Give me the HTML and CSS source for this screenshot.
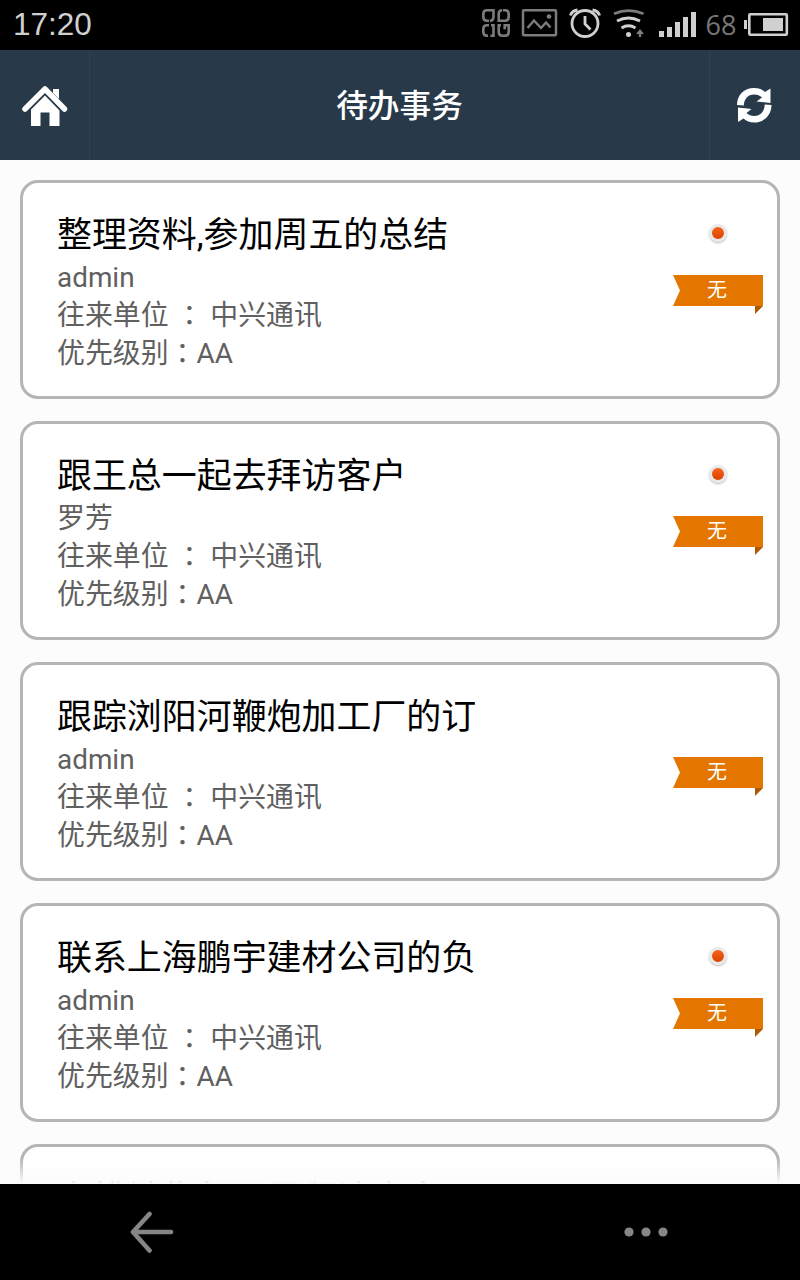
FILE: index.html
```html
<!DOCTYPE html>
<html lang="zh-CN">
<head>
  <meta charset="UTF-8">
  <meta name="viewport" content="width=device-width, initial-scale=1.0">
  <title>待办事务</title>
  <link rel="stylesheet" href="styles.css">
</head>
<body>
  <div class="status-bar">
    <span class="clock">17:20</span>
    <svg class="status-icons" width="330" height="50" viewBox="0 0 330 50">
      <!-- app grid -->
      <g fill="none" stroke="#7c7c7c" stroke-width="2.600">
        <path d="M19 20.700h-2q-3.700 0-3.700-3.700v-3q0-3.700 3.700-3.700h6.500v7q0 3.400-3.500 3.400"/>
        <path d="M33 10.300h2q3.700 0 3.700 3.700v3q0 3.700-3.700 3.700h-6.300v-7q0-3.400 3.500-3.400"/>
        <path d="M19 25.300h-2q-3.700 0-3.700 3.700v3q0 3.700 3.700 3.700h1M20.500 35.700h3v-10.400h-2.500"/>
        <path d="M31 25.300h-2.300v6.700q0 3.700 3.700 3.700h2.600q3.700 0 3.700-3.700v-6.700h-4v4"/>
      </g>
      <!-- picture -->
      <g fill="none" stroke="#7c7c7c" stroke-width="2.500">
        <rect x="53" y="10.300" width="33" height="25" rx="1"/>
        <path d="M57.500 28l6.500-7.500 7 7.500 5-5.500 4.500 5"/>
        <circle cx="79" cy="16.500" r="2.300" fill="#7c7c7c" stroke="none"/>
      </g>
      <!-- alarm -->
      <g fill="none" stroke="#d0d0d0">
        <circle cx="115" cy="23.500" r="13" stroke-width="2.800"/>
        <path d="M115 16v8l5.500 5.500" stroke-width="2.800"/>
        <path d="M100.500 15.500q1-4.500 7-5.500M129.500 15.500q-1-4.500-7-5.500" stroke-width="3"/>
      </g>
      <!-- wifi -->
      <g fill="none" stroke="#d0d0d0" stroke-width="2.800">
        <path d="M144 13.800q14.500-6.500 29.500 0" stroke="#7c7c7c"/>
        <path d="M147 21q11.500-6 23 0"/>
        <path d="M151.500 28q7-4.500 14 0"/>
        <circle cx="158.500" cy="34.500" r="2.500" fill="#d0d0d0" stroke="none"/>
        <path d="M170 29l4 5h-2.800v3h-2.400v-3h-2.800z" fill="#7c7c7c" stroke="none"/>
      </g>
      <!-- signal -->
      <path d="M189 31h5v6h-5zM197 27h5v10h-5zM205 22h5v15h-5zM213 17h5v20h-5zM221 12h5v25h-5z" fill="#d0d0d0"/>
      <text class="battery-level" x="235.500" y="34.500">68</text>
      <!-- battery -->
      <rect x="279.300" y="14.300" width="37.500" height="20.500" rx="1" fill="none" stroke="#d0d0d0" stroke-width="2.600"/>
      <path d="M274 20h3v9h-3zM293 18h20v13h-20z" fill="#d0d0d0"/>
    </svg>
  </div>

  <div class="header">
    <div class="header-btn left">
      <svg width="46" height="42" viewBox="0 0 46 42">
        <path d="M31 4h6v10l-6-6z" fill="#fff"/>
        <path d="M3 24L23 4l19.500 20" fill="none" stroke="#fff" stroke-width="5.500" stroke-linecap="round" stroke-linejoin="round"/>
        <path d="M23 10.500l14.500 15v15.500H27.500V27.500H18.500V41H9V24.500z" fill="#fff"/>
        <path d="M7 25.500L23 9l15 15.500" fill="none" stroke="#283a49" stroke-width="1"/>
      </svg>
    </div>
    <h1>待办事务</h1>
    <div class="header-btn right">
      <svg width="36" height="36" viewBox="0 0 36 36">
        <g fill="#fff">
          <path d="M1 18C1 8 8 1 18 1c5 0 8 1.200 11 4l5.500-3.500V16L20.500 14.500l5.500-4C24 8.500 21.500 7.500 18 7.500 12 7.500 8 12 7.800 18.500z"/>
          <path d="M35.500 18C35.500 28 28 35.500 18.500 35.500c-5 0-8-1.200-11-4L2 35V20.500L15.500 22l-5 4c2 2 4.500 3 8 3 6 0 10-4.500 10.200-11.500z"/>
        </g>
      </svg>
    </div>
  </div>

  <div class="list">
    <div class="card">
      <div class="info">
        <h2>整理资料,参加周五的总结</h2>
        <p>admin</p>
        <p>往来单位 <span class="colon" lang="zh-TW">：</span> 中兴通讯</p>
        <p>优先级别<span class="colon" lang="zh-TW">：</span>AA</p>
      </div>
      <div class="side">
        <span class="dot"></span>
        <div class="ribbon">无</div>
      </div>
    </div>
    <div class="card">
      <div class="info">
        <h2>跟王总一起去拜访客户</h2>
        <p>罗芳</p>
        <p>往来单位 <span class="colon" lang="zh-TW">：</span> 中兴通讯</p>
        <p>优先级别<span class="colon" lang="zh-TW">：</span>AA</p>
      </div>
      <div class="side">
        <span class="dot"></span>
        <div class="ribbon">无</div>
      </div>
    </div>
    <div class="card">
      <div class="info">
        <h2>跟踪浏阳河鞭炮加工厂的订</h2>
        <p>admin</p>
        <p>往来单位 <span class="colon" lang="zh-TW">：</span> 中兴通讯</p>
        <p>优先级别<span class="colon" lang="zh-TW">：</span>AA</p>
      </div>
      <div class="side">
        <span class="dot read"></span>
        <div class="ribbon">无</div>
      </div>
    </div>
    <div class="card">
      <div class="info">
        <h2>联系上海鹏宇建材公司的负</h2>
        <p>admin</p>
        <p>往来单位 <span class="colon" lang="zh-TW">：</span> 中兴通讯</p>
        <p>优先级别<span class="colon" lang="zh-TW">：</span>AA</p>
      </div>
      <div class="side">
        <span class="dot"></span>
        <div class="ribbon">无</div>
      </div>
    </div>
    <div class="card">
      <div class="info">
        <h2>安排销售部下周拜访客户</h2>
      </div>
    </div>
    <div class="fade"></div>
  </div>

  <div class="nav-bar">
    <svg width="44" height="44" viewBox="0 0 44 44">
      <path d="M19.500 4L3 22l16.500 18.500M3 22h38" fill="none" stroke="#868686" stroke-width="4.600" stroke-linecap="round" stroke-linejoin="round"/>
    </svg>
    <svg width="44" height="10" viewBox="0 0 44 10">
      <g fill="#868686">
        <circle cx="5" cy="5" r="4.600"/>
        <circle cx="22" cy="5" r="4.600"/>
        <circle cx="39" cy="5" r="4.600"/>
      </g>
    </svg>
  </div>
</body>
</html>
```

FILE: styles.css
```css
* {
  box-sizing: border-box;
}
body {
  margin: 0;
  width: 800px;
  height: 1280px;
  display: flex;
  flex-direction: column;
  overflow: hidden;
  background-color: #fcfcfc;
  font-family: Roboto, "Noto Sans CJK SC", sans-serif;
}
h1, h2, p {
  margin: 0;
  font-weight: normal;
}
.status-bar {
  height: 50px;
  background-color: #000;
  display: flex;
  align-items: center;
  justify-content: space-between;
  padding-left: 13px;
}
.clock {
  color: #d0d0d0;
  font-family: "Liberation Sans", sans-serif;
  font-size: 31.500px;
  line-height: 48px;
  padding-bottom: 2px;
}
.battery-level {
  fill: #777;
  font-family: "Open Sans", sans-serif;
  font-size: 27px;
}
.header {
  height: 110px;
  display: flex;
  align-items: center;
  justify-content: space-between;
  background-color: #283a49;
}
.header h1 {
  padding-top: 3px;
  color: #fff;
  font-size: 31.700px;
  font-weight: 500;
  line-height: 46px;
}
.header-btn {
  width: 90px;
  height: 110px;
  display: flex;
  align-items: center;
  justify-content: center;
}
.left {
  border-right: 1px solid #2e4252;
  padding-top: 2px;
}
.right {
  width: 91px;
  border-left: 1px solid #2e4252;
  padding-right: 2px;
}
.list {
  position: relative;
  flex: 1;
  min-height: 0;
  overflow: hidden;
  display: flex;
  flex-direction: column;
  gap: 22px;
  padding: 20px 20px 0;
}
.card {
  flex: none;
  height: 219px;
  border: 3px solid #b5b5b5;
  border-radius: 18px;
  background-color: #fff;
  display: flex;
  justify-content: space-between;
  padding: 28px 14px 0 34px;
}
.card h2 {
  padding-top: 1px;
  font-size: 34.950px;
  line-height: 47px;
  color: #000;
}
.card p {
  font-size: 27.900px;
  line-height: 37.800px;
  color: #606060;
}
.colon {
  position: relative;
  top: 1px;
  font-family: "Noto Sans CJK TC", sans-serif;
  line-height: 0;
}
.side {
  width: 90px;
  display: flex;
  flex-direction: column;
  align-items: center;
  padding-top: 13px;
}
.dot {
  width: 18px;
  height: 18px;
  margin-right: 1px;
  border: 3px solid #e9e9e9;
  border-radius: 50%;
  background: linear-gradient(#f4641c, #dc4200);
  box-shadow: 0 1px 2px rgba(0, 0, 0, 0.3);
}
.dot.read {
  visibility: hidden;
}
.ribbon {
  position: relative;
  width: 90px;
  height: 31px;
  margin-top: 33px;
  padding-right: 2px;
  background-color: #e47600;
  clip-path: polygon(0 0, 100% 0, 100% 130%, 50% 130%, 50% 100%, 0 100%, 7px 50%);
  color: #fff;
  font-size: 20px;
  line-height: 31px;
  text-align: center;
}
/* folded corner */
.ribbon::after {
  content: "";
  position: absolute;
  right: 0;
  top: 31px;
  border-top: 8px solid #b05800;
  border-right: 8px solid transparent;
}
.fade {
  position: absolute;
  left: 0;
  right: 0;
  bottom: 0;
  height: 26px;
  background: linear-gradient(rgba(252, 252, 252, 0), #fcfcfc);
}
.nav-bar {
  height: 96px;
  background-color: #000;
  display: flex;
  align-items: center;
  justify-content: space-between;
  padding: 0 132px 0 130px;
}
```
